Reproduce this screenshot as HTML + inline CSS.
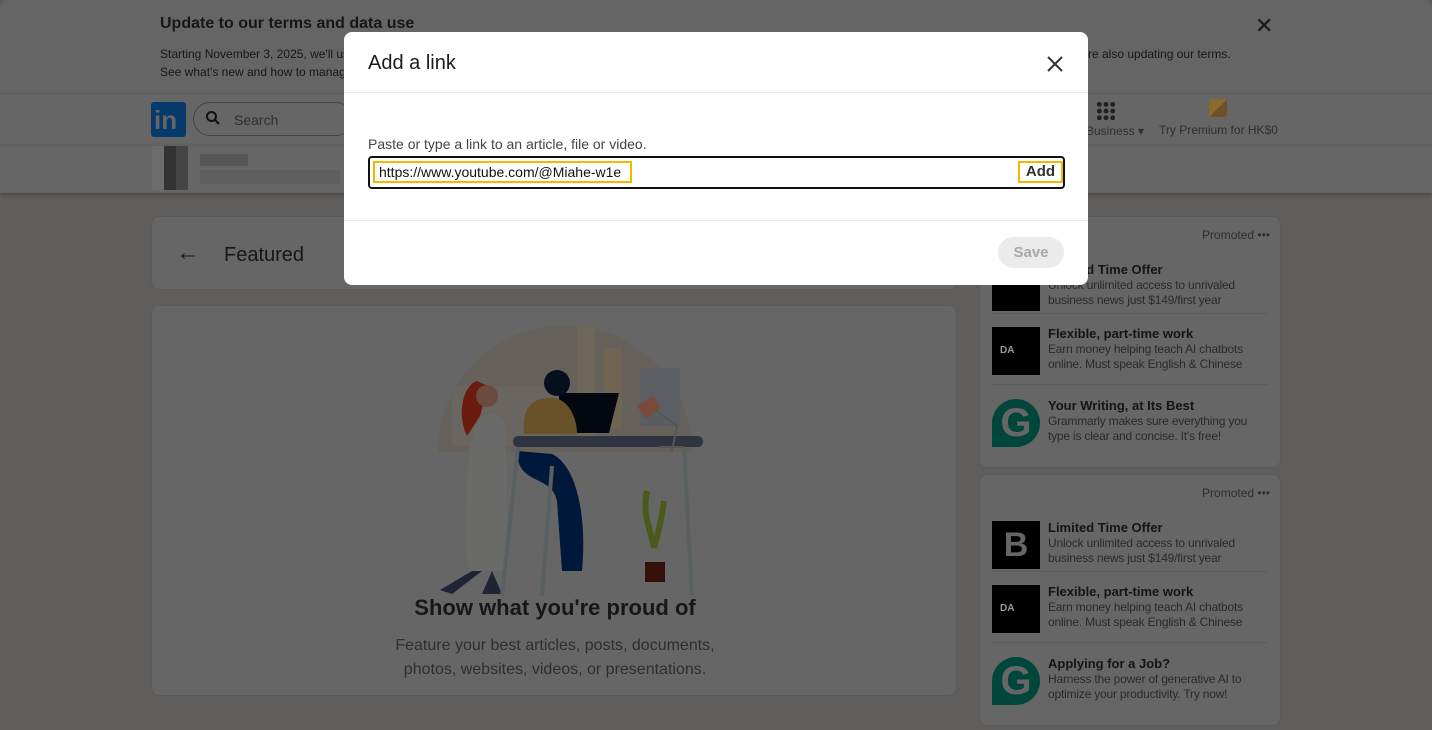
<!DOCTYPE html>
<html><head><meta charset="utf-8"><style>
*{box-sizing:border-box;margin:0;padding:0}
body{width:1432px;height:730px;overflow:hidden;background:#5f5e5c;font-family:"Liberation Sans",sans-serif;position:relative;color:#1a1a1a}
.abs{position:absolute}
.banner{left:0;top:0;width:1432px;height:93px;background:#656565;border-top-left-radius:10px;border-top-right-radius:10px}
.nav{left:0;top:93px;width:1432px;height:52px;background:#666;border-top:1px solid #5c5c5c}
.sub{left:0;top:145px;width:1432px;height:48px;background:#666;border-top:1px solid #5f5f5f;box-shadow:0 2px 4px rgba(0,0,0,.25)}
.card{background:#666;border:1px solid #5a5a5a;border-radius:8px}
.t{color:#171717}
.g{color:#2e2e2e}
.ad{position:absolute;left:12px;width:276px;height:58px}
.ad .im{position:absolute;left:0;top:0;width:48px;height:48px;background:#000}
.ad h4{position:absolute;left:56px;top:-1px;font-size:13px;color:#151515;font-weight:bold}
.ad p{position:absolute;left:56px;top:15px;font-size:12px;line-height:15px;color:#2a2a2a;width:220px;letter-spacing:-.2px}
.sep{position:absolute;left:12px;width:276px;height:1px;background:#5c5c5c}
.modal{left:344px;top:32px;width:744px;height:253px;background:#fff;border-radius:8px}
.da{color:#999;font-size:10px;font-weight:bold;line-height:48px;padding-left:8px}
</style></head><body>
<div class="abs banner">
 <div class="abs t" style="left:160px;top:15px;font-size:16px;font-weight:bold">Update to our terms and data use</div>
 <div class="abs t" style="left:160px;top:47px;font-size:12px">Starting November 3, 2025, we'll us</div>
 <div class="abs t" style="left:160px;top:65px;font-size:12px">See what's new and how to manag</div>
 <div class="abs t" style="left:1088px;top:47px;font-size:12px">re also updating our terms.</div>
 <div class="abs t" style="left:1255px;top:15px;font-size:22px;line-height:22px">✕</div>
</div>
<div class="abs nav">
 <div class="abs" style="left:151px;top:8px;width:35px;height:35px;background:#053a6a;border-radius:3px;color:#666;font-weight:bold;font-size:26px;line-height:36px;padding-left:3px">in</div>
 <div class="abs" style="left:193px;top:8px;width:160px;height:34px;border:1px solid #444;border-radius:17px"></div>
 <svg class="abs" style="left:205px;top:16px" width="16" height="16" viewBox="0 0 16 16"><circle cx="6.5" cy="6.5" r="4.5" fill="none" stroke="#111" stroke-width="2"/><path d="M10 10l4 4" stroke="#111" stroke-width="2.2"/></svg>
 <div class="abs g" style="left:234px;top:18px;font-size:14px">Search</div>
 <div class="abs" style="left:1096px;top:7px;width:20px;height:20px;background:radial-gradient(circle,#222 2.3px,transparent 2.6px) 0 0/6.7px 6.7px"></div>
 <div class="abs g" style="left:1086px;top:30px;font-size:12px">Business ▾</div>
 <div class="abs" style="left:1209px;top:5px;width:18px;height:18px;background:linear-gradient(135deg,#8a6a2e 50%,#6e5025 50%);border-radius:3px"></div>
 <div class="abs g" style="left:1159px;top:29px;font-size:12px">Try Premium for HK$0</div>
</div>
<div class="abs sub">
 <div class="abs" style="left:152px;top:0;width:36px;height:44px;background:linear-gradient(90deg,#6d6d6d 33%,#333 33%,#333 66%,#444 66%)"></div>
 <div class="abs" style="left:200px;top:8px;width:48px;height:12px;background:#555"></div>
 <div class="abs" style="left:200px;top:24px;width:140px;height:14px;background:#5e5e5e"></div>
</div>
<div class="abs card" style="left:151px;top:216px;width:806px;height:74px">
 <div class="abs t" style="left:24px;top:22px;font-size:24px">←</div>
 <div class="abs t" style="left:72px;top:27px;font-size:20px">Featured</div>
</div>
<div class="abs card" style="left:151px;top:305px;width:806px;height:391px">
 <svg class="abs" style="left:240px;top:20px" width="340" height="270" viewBox="0 0 340 270">
  <path d="M46 126 A127 127 0 0 1 300 126 Z" fill="#67615b"/>
  <rect x="185" y="0" width="18" height="110" fill="#6d6659"/>
  <rect x="212" y="22" width="18" height="80" fill="#706553"/>
  <rect x="248" y="42" width="40" height="58" fill="#5a5e63"/>
  <rect x="60" y="60" width="110" height="60" fill="#6a6762" opacity=".8"/>
  <path d="M78 120 C70 220 74 230 78 245 L117 245 L113 95 Q100 80 85 95 Z" fill="#6a6a68"/>
  <path d="M80 245 L48 264 L60 268 L90 245Z M100 245 L90 268 L110 268 Z" fill="#1e2433"/>
  <path d="M85 55 C70 60 65 90 75 110 L88 90 L96 60Z" fill="#6b1a10"/>
  <circle cx="95" cy="70" r="11" fill="#6b4a3f"/>
  <rect x="121" y="110" width="190" height="11" rx="5" fill="#2f3540"/>
  <path d="M167 67 h60 l-10 40 h-50z" fill="#03070f"/>
  <path d="M132 108 C130 80 140 72 160 72 C175 72 185 90 185 108Z" fill="#6a5228"/>
  <circle cx="165" cy="57" r="13" fill="#06101c"/>
  <path d="M125 125 C125 160 160 148 165 175 L170 245 L190 245 C195 190 185 140 160 128Z" fill="#00193a"/>
  <path d="M126 121 L110 270 M292 121 L300 270 M160 140 L150 270" stroke="#5a6062" stroke-width="4"/>
  <path d="M255 165 C250 190 258 200 262 222 M262 222 C268 200 270 190 272 175" stroke="#4b5a1a" stroke-width="6" fill="none"/>
  <rect x="253" y="236" width="20" height="20" fill="#35100b"/>
  <path d="M262 83 L285 100 L280 125 M267 121 h25" stroke="#555" stroke-width="2" fill="none"/>
  <path d="M245 80 L262 70 L268 82 L254 93Z" fill="#7a4a3a"/>
 </svg>
 <div class="abs t" style="left:0;width:806px;text-align:center;top:289px;font-size:22px;font-weight:bold">Show what you're proud of</div>
 <div class="abs g" style="left:0;width:806px;text-align:center;top:328px;font-size:16px;line-height:24px">Feature your best articles, posts, documents,<br>photos, websites, videos, or presentations.</div>
</div>
<div class="abs card" style="left:979px;top:216px;width:302px;height:252px">
 <div class="abs g" style="right:10px;top:11px;font-size:12px">Promoted •••</div>
 <div class="ad" style="top:46px"><div class="im"></div><h4>Limited Time Offer</h4><p>Unlock unlimited access to unrivaled business news just $149/first year</p></div>
 <div class="sep" style="top:96px"></div>
 <div class="ad" style="top:110px"><div class="im da">DA</div><h4>Flexible, part-time work</h4><p>Earn money helping teach AI chatbots online. Must speak English &amp; Chinese</p></div>
 <div class="sep" style="top:167px"></div>
 <div class="ad" style="top:182px"><div class="im" style="background:#00463a;border-radius:24px 24px 24px 0;color:#666;font-size:40px;font-weight:bold;text-align:center;line-height:48px">G</div><h4>Your Writing, at Its Best</h4><p>Grammarly makes sure everything you type is clear and concise. It's free!</p></div>
</div>
<div class="abs card" style="left:979px;top:474px;width:302px;height:252px">
 <div class="abs g" style="right:10px;top:11px;font-size:12px">Promoted •••</div>
 <div class="ad" style="top:46px"><div class="im" style="color:#666;font-size:34px;font-weight:bold;text-align:center;line-height:48px">B</div><h4>Limited Time Offer</h4><p>Unlock unlimited access to unrivaled business news just $149/first year</p></div>
 <div class="sep" style="top:96px"></div>
 <div class="ad" style="top:110px"><div class="im da">DA</div><h4>Flexible, part-time work</h4><p>Earn money helping teach AI chatbots online. Must speak English &amp; Chinese</p></div>
 <div class="sep" style="top:167px"></div>
 <div class="ad" style="top:182px"><div class="im" style="background:#00463a;border-radius:24px 24px 24px 0;color:#666;font-size:40px;font-weight:bold;text-align:center;line-height:48px">G</div><h4>Applying for a Job?</h4><p>Harness the power of generative AI to optimize your productivity. Try now!</p></div>
</div>
<div class="abs modal">
 <div class="abs" style="left:24px;top:20px;font-size:20px;color:#1a1a1a">Add a link</div>
 <svg class="abs" style="left:702px;top:23px" width="18" height="18" viewBox="0 0 18 18"><path d="M2 2L16 16M16 2L2 16" stroke="#333" stroke-width="2"/></svg>
 <div class="abs" style="left:0;top:60px;width:744px;height:1px;background:#e6e6e6"></div>
 <div class="abs" style="left:24px;top:104px;font-size:14px;color:#444">Paste or type a link to an article, file or video.</div>
 <div class="abs" style="left:24px;top:124px;width:697px;height:33px;border:2px solid #111;border-radius:4px"></div>
 <div class="abs" style="left:29px;top:129px;width:259px;height:22px;border:2px solid #f5b800;font-size:14px;line-height:18px;padding-left:4px;color:#111">https://www.youtube.com/@Miahe-w1e</div>
 <div class="abs" style="left:674px;top:129px;width:45px;height:22px;border:2px solid #f5b800;font-size:15px;line-height:18px;text-align:center;color:#333;font-weight:bold">Add</div>
 <div class="abs" style="left:0;top:188px;width:744px;height:1px;background:#e6e6e6"></div>
 <div class="abs" style="left:654px;top:205px;width:66px;height:31px;border-radius:16px;background:#ebebeb;color:#a8a8a8;font-size:15px;font-weight:bold;text-align:center;line-height:31px">Save</div>
</div>
</body></html>
